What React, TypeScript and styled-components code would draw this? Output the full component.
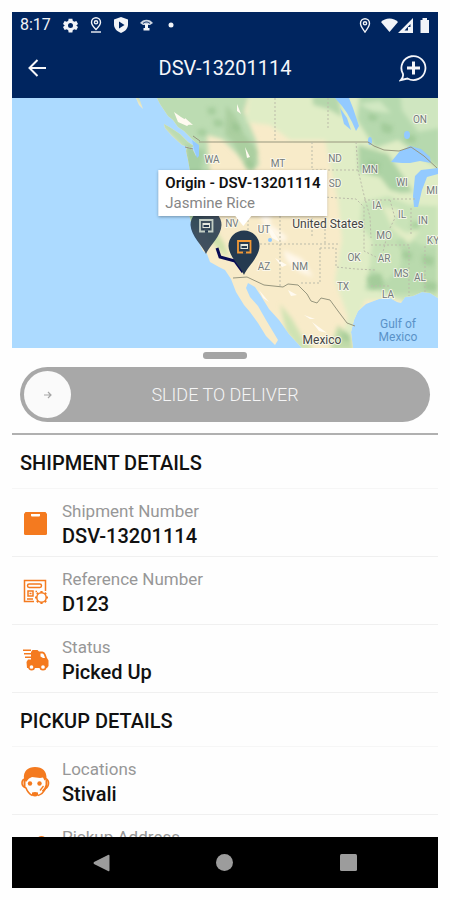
import React, { useState } from "react";
import styled, { createGlobalStyle } from "styled-components";

const GlobalStyle = createGlobalStyle`
  *, *::before, *::after { box-sizing: border-box; }
  body {
    margin: 0;
    background: #fefefe;
    color: #111;
    font-family: Roboto, "Liberation Sans", sans-serif;
  }
`;

const NAVY = "#00255f";
const ORANGE = "#f47a1f";

const Page = styled.main`
  height: 100vh;
  padding: 12px;
  display: flex;
`;

const Phone = styled.div`
  flex: 1;
  min-width: 0;
  display: flex;
  flex-direction: column;
  background: #fefefe;
`;

const StatusBar = styled.div`
  flex: none;
  height: 26px;
  padding: 0 8px;
  display: flex;
  align-items: center;
  justify-content: space-between;
  background: ${NAVY};
  color: #f2f4f8;
`;

const StatusGroup = styled.div<{ $gap: number }>`
  display: flex;
  align-items: center;
  gap: ${(p) => p.$gap}px;
`;

const Clock = styled.time`
  font-size: 16px;
  line-height: 24px;
  font-weight: 400;
`;

const Header = styled.header`
  flex: none;
  height: 60px;
  padding: 0 8px;
  display: grid;
  grid-template-columns: 34px 1fr 34px;
  align-items: center;
  background: ${NAVY};
  color: #f5f6fa;
`;

const HeaderTitle = styled.h1`
  margin: 0;
  font-size: 20px;
  line-height: 28px;
  font-weight: 400;
  text-align: center;
`;

const IconButton = styled.button`
  border: 0;
  padding: 0;
  height: 34px;
  background: none;
  color: inherit;
  display: flex;
  align-items: center;
  justify-content: center;
  cursor: pointer;
`;

const MapArea = styled.section`
  flex: none;
  height: 250px;
  position: relative;
  overflow: hidden;
  background: #acdaff;
`;

const MapDrawing = styled.svg`
  display: block;
  width: 100%;
  height: 100%;
`;

const Callout = styled.div`
  position: absolute;
  top: 72px;
  left: calc(50% + 18px);
  transform: translateX(-50%);
  padding: 3px 7px;
  background: #fff;
  box-shadow: 0 1px 3px rgba(0, 0, 0, 0.35);
  white-space: nowrap;

  &::after {
    content: "";
    position: absolute;
    top: 100%;
    left: 50%;
    margin-left: -8px;
    border: 8px solid transparent;
    border-top: 10px solid #fff;
    border-bottom: 0;
  }
`;

const CalloutTitle = styled.div`
  font-size: 15px;
  line-height: 20px;
  font-weight: 600;
`;

const CalloutText = styled.div`
  font-size: 15px;
  line-height: 20px;
  font-weight: 400;
  color: #868686;
`;

const Sheet = styled.section`
  flex: 1;
  min-height: 0;
  overflow: hidden;
  display: flex;
  flex-direction: column;
`;

const Handle = styled.div`
  flex: none;
  width: 44px;
  height: 7px;
  margin: 4px auto 8px;
  border-radius: 3px;
  background: #a5a5a5;
`;

const SlideBox = styled.div`
  flex: none;
  margin: 0 8px 11px;
  height: 55px;
  border-radius: 28px;
  background: #a8a8a8;
  display: grid;
  align-items: center;

  > * { grid-area: 1 / 1; }
`;

const SlideInput = styled.input`
  appearance: none;
  width: 100%;
  height: 55px;
  margin: 0;
  padding: 0 4px;
  background: transparent;
  cursor: pointer;

  &::-webkit-slider-thumb {
    appearance: none;
    width: 47px;
    height: 47px;
    border-radius: 50%;
    background: #fafafa;
  }
`;

const SlideLabel = styled.label`
  justify-self: center;
  pointer-events: none;
  font-size: 18px;
  line-height: 24px;
  font-weight: 300;
  color: #f5f5f5;
`;

const SlideArrow = styled.svg`
  margin-left: 22px;
  pointer-events: none;
`;

const Details = styled.div`
  border-top: 2px solid #b0b0b0;
`;

const SectionTitle = styled.h2`
  margin: 0;
  padding: 14px 8px 11px;
  font-size: 20px;
  line-height: 28px;
  font-weight: 500;
  border-bottom: 1px solid #f6f6f6;
`;

const Row = styled.div`
  height: 68px;
  padding: 2px 8px 0;
  display: grid;
  grid-template-columns: 31px 1fr;
  column-gap: 11px;
  align-items: center;
  border-bottom: 1px solid #f0f0f0;
`;

const RowIcon = styled.span`
  display: flex;
  justify-content: center;
  color: ${ORANGE};
`;

const List = styled.dl`
  margin: 0;
`;

const RowLabel = styled.dt`
  font-size: 17px;
  line-height: 24px;
  font-weight: 400;
  color: #979797;
`;

const RowValue = styled.dd`
  margin: 0;
  min-height: 26px;
  font-size: 20px;
  line-height: 26px;
  font-weight: 500;
`;

const NavBar = styled.nav`
  flex: none;
  height: 51px;
  padding: 0 28px;
  display: grid;
  grid-template-columns: repeat(3, 1fr);
  align-items: center;
  background: #000;
  color: #9c9c9c;
`;

const stateLabels: [string, number, number][] = [
  ["WA", 212, 159], ["MT", 278, 163], ["ND", 335, 158], ["ON", 420, 119],
  ["MN", 370, 169], ["SD", 335, 183], ["WI", 402, 182], ["MI", 432, 190],
  ["IA", 377, 205], ["IL", 402, 214], ["IN", 423, 220], ["NV", 232, 223],
  ["UT", 264, 229], ["MO", 384, 235], ["KY", 433, 240], ["OK", 354, 257],
  ["AR", 384, 258], ["AZ", 264, 266], ["NM", 300, 266], ["MS", 401, 273],
  ["AL", 420, 277], ["TX", 343, 286], ["LA", 388, 294],
];

function Pin({ x, y, accent, opacity }: { x: number; y: number; accent: string; opacity: number }) {
  return (
    <g transform={`translate(${x} ${y})`}>
      <path d="M0 0C-3-8-15-18-15.500-29A15.500 15.500 0 0 1 15.500-29C15.500-18 3-8 0 0Z" fill="#253a50" opacity={opacity} />
      <path d="M-6-34H6.500V-22.500H-6Z" fill="none" stroke={accent} strokeWidth="1.800" />
      <path d="M-3.500-31H4V-26H-3.500Z" fill="#e4e8df" />
      <path d="M-2.500-29H3V-27H-2.500ZM-3.500-25H-2V-24H-3.500ZM2.500-25H4V-24H2.500Z" fill="#253a50" />
      <path d="M-1-22.500H2" stroke="#253a50" strokeWidth="2.500" />
    </g>
  );
}

function RouteMap() {
  return (
    <MapDrawing viewBox="12 98 426 250" preserveAspectRatio="xMidYMid slice" role="img" aria-label="Route map">
      <defs>
        <filter id="soften" x="-20%" y="-20%" width="140%" height="140%"><feGaussianBlur stdDeviation="2" /></filter>
        <clipPath id="land">
          <path d="M157 98L160 104L164 110L168 116L173 120L178 127L184 131L190 137L195 142L198 150L196 156L193 150L187 147L186 151L188 160L190 171L189 190L188 210L193 230L203 251L207 254L210 262L219 267L225 270L231 279L236 292L244 305L250 312L258 323L266 336L275 345L278 340L272 330L266 320L258 306L250 297L246 288L248 283L255 287L261 296L269 309L279 320L289 334L302 348H353L351 332L354 320L358 311L366 304L379 299L390 298L397 302L401 303L405 297L413 296L422 292L430 293L438 298V98Z" />
          <path d="M164 124L171 128L180 134L188 142L194 146L191 148L182 145L172 136L165 128Z" />
          <path d="M136 98H139L143 109L139 105Z" />
        </clipPath>
      </defs>
      <rect x="12" y="98" width="426" height="250" fill="#acdaff" />
      <g clipPath="url(#land)">
        <rect x="12" y="98" width="426" height="250" fill="#f8ebc9" />
        <g filter="url(#soften)">
          <path d="M130 90H250L244 112L256 140L259 165L250 172L238 155L222 139L207 135L210 175L201 202L202 230L185 230V150L155 120Z" fill="#bcdcb2" />
          <path d="M185 145L205 150L199 185L204 213L197 229L187 213Z" fill="#a7cfa2" />
          <path d="M250 90H442V300H365L351 345H340L348 317L335 280L342 240L338 200L325 140H290L270 125L246 122Z" fill="#e0edc6" />
          <path d="M312 94L338 94L342 117L328 109L313 105Z" fill="#b5d7ab" />
          <path d="M360 90H440V170L398 140L375 148L357 120Z" fill="#b6d9ae" />
          <path d="M400 90H440V128L418 132L402 110Z" fill="#cfe6c0" />
          <path d="M358 145L388 154L403 176L413 192L401 193L390 190L380 177L359 172Z" fill="#add3a5" />
          <path d="M362 202L388 196L410 205L438 206V302H405L379 291L369 274L372 241L360 224Z" fill="#c9e3b8" />
          <path d="M370 252L392 240L402 250L400 269L385 281L370 267L365 290L382 290L396 294L438 293V245L423 246L405 237Z" fill="#b9daad" />
          <path d="M226 105L235 115L244 134L258 151L254 171L240 157L233 142L225 135Z" fill="#abcfa0" />
          <path d="M204 219L213 227L224 243L229 258L221 252L207 237Z" fill="#cfe1ab" />
          <path d="M280 304L292 319L303 338L315 350H298L286 331Z" fill="#cfe3b3" />
          <path d="M338 325L350 337L354 350H330Z" fill="#c1dbaa" />
          <path d="M256 205L271 214L270 224L287 237L284 242L266 230Z" fill="#fff8eb" />
          <path d="M283 250L302 259L313 277L300 272L287 261Z" fill="#fff8eb" />
          <path d="M382 206L400 210L392 224L406 233L420 230L409 244L393 229Z" fill="#e3edc6" />
          <path d="M268 206L310 202L319 210L289 215Z" fill="#e4e9bd" />
          <path d="M359 104L380 101L391 113L372 111Z" fill="#d1e8c2" />
        </g>
        <g fill="#fffaf0">
          <path d="M174 112L181 117L191 123L187 126L178 122ZM185 118L193 125L184 124ZM237 104L241 114L237 111ZM245 147L250 157L247 158Z" />
          <path d="M265 224L272 230L280 242L272 238ZM275 258L287 265L282 267ZM288 290L297 295L291 296ZM312 322L327 333L319 331ZM259 290L269 302L263 298ZM304 315L315 319L310 319Z" />
        </g>
        <g fill="#8fbe87" opacity=".5" filter="url(#soften)">
          <path d="M207 108L215 107L216 114L209 115ZM213 119L222 120L224 126L215 127ZM232 122L239 125L240 132L233 130ZM197 130L205 129L207 135L199 136Z" />
          <path d="M201 180L207 182L208 189L202 187ZM244 161L252 161L253 170L246 169ZM381 122L393 126L391 134L382 132ZM369 113L378 116L376 121L368 120Z" />
          <path d="M405 134L416 136L415 143L406 142ZM366 277L381 273L384 287L371 290ZM402 250L412 253L411 260L403 258ZM422 255L434 257L433 266L423 264ZM424 281L437 283L436 291L425 290ZM368 161L380 163L378 171L369 170ZM412 221L420 223L418 229L411 228ZM341 331L349 334L350 342L343 340Z" />
        </g>
      </g>
      <g fill="#93caff">
        <path d="M335 98H349L353 108L359 126L356 131L352 122L347 113L342 106Z" />
        <path d="M340 108L347 118L351 130L344 124Z" />
        <path d="M391 162L400 151L410 146L421 149L430 157L431 163L420 161L410 163L402 163Z" />
        <path d="M415 176L421 170L438 168V174L427 177L422 190L418 207H414L413 196Z" />
        <ellipse cx="407" cy="135" rx="3" ry="4" /><ellipse cx="370" cy="141" rx="2" ry="4" />
        <path d="M192 140L199 145L199 156L197 158L194 149Z" /><circle cx="270" cy="240" r="2" />
      </g>
      <g fill="none" stroke="#97967e" strokeWidth="1" strokeLinejoin="round">
        <path d="M199 142H368L374 146L384 150L399 151L411 147L424 156L437 168" />
        <path d="M233 278L247 277L264 285L283 287L288 284L298 285L307 294L311 301L317 303L321 298L330 300L338 311L347 323L355 326" />
        <path d="M185 147L193 149M193 136L200 141" />
      </g>
      <g fill="none" stroke="#bbbba9" strokeWidth="1" strokeDasharray="2 2">
        <path d="M275 98V142M328 98V130M312 142V236M312 170H359M323 197L356 199L364 207V251L376 257M280 212V286M248 220V244L255 257M248 244H338M280 206H325V244M320 248H336V267L356 269L376 270M320 248V283H301M356 142L358 170L364 195L370 217L371 238M364 200H390M390 200L395 218L388 232L383 252M371 245H409V296M393 199H415M411 208V236M425 246V292M371 286H390" />
      </g>
      <g fontFamily='Roboto, "Liberation Sans", sans-serif' textAnchor="middle" paintOrder="stroke" stroke="#fcfbf2" strokeOpacity=".8" strokeWidth="2" strokeLinejoin="round">
        <g fontSize="10" fill="#737a7b">
          {stateLabels.map(([name, x, y]) => <text key={name} x={x} y={y + 4}>{name}</text>)}
        </g>
        <text x="328" y="228" fontSize="12" fill="#444">United States</text>
        <text x="322" y="344" fontSize="12" fill="#444">Mexico</text>
      </g>
      <g fontFamily='Roboto, "Liberation Sans", sans-serif' textAnchor="middle" fontSize="12" fill="#5a92c8">
        <text x="398" y="328">Gulf of</text>
        <text x="398" y="341">Mexico</text>
      </g>
      <path d="M217 248L220 257L235 261L243 272" fill="none" stroke="#080a55" strokeWidth="3" />
      <Pin x={206} y={254} accent="#c4cfc5" opacity={0.88} />
      <Pin x={244} y={275} accent="#f39a36" opacity={1} />
    </MapDrawing>
  );
}

const GearIcon = () => (
  <svg width="15" height="15" viewBox="0 0 24 24" fill="currentColor" aria-hidden="true">
    <path fillRule="evenodd" d="M9 1H15L15.600 4.500L18 6L21.400 4.700L24 9.500L21.200 12L24 14.500L21.400 19.300L18 18L15.600 19.500L15 23H9L8.400 19.500L6 18L2.600 19.300L0 14.500L2.800 12L0 9.500L2.600 4.700L6 6L8.400 4.500ZM12 8A4 4 0 1 0 12 16A4 4 0 0 0 12 8Z" />
  </svg>
);

const PlaceIcon = ({ base }: { base: boolean }) => (
  <svg width="12" height="16" viewBox="0 0 12 16" fill="none" stroke="currentColor" strokeWidth="1.400" aria-hidden="true">
    <path d={base ? "M6 12.500C4 10.500 1.500 8.500 1.500 5.300A4.500 4.500 0 0 1 10.500 5.300C10.500 8.500 8 10.500 6 12.500Z" : "M6 15C4 12 1.500 9.500 1.500 6.300A4.500 4.500 0 0 1 10.500 6.300C10.500 9.500 8 12 6 15Z"} />
    <circle cx="6" cy={base ? 5.3 : 6.3} r="1.600" />
    {base && <path d="M1 15H11" />}
  </svg>
);

const ShieldIcon = () => (
  <svg width="14" height="16" viewBox="0 0 14 16" aria-hidden="true">
    <path d="M7 0L14 2.500V7.500C14 11.500 11 14.500 7 16C3 14.500 0 11.500 0 7.500V2.500Z" fill="currentColor" />
    <path d="M5 4.500L10.500 8L5 11.500Z" fill={NAVY} />
  </svg>
);

const SignalIcon = () => (
  <svg width="13" height="12" viewBox="0 0 13 12" aria-hidden="true">
    <path d="M0 4C3-.5 10-.5 13 4L10 6H3Z" fill="currentColor" opacity=".85" />
    <path d="M3 4.500C5 2.500 8 2.500 10 4.500" fill="none" stroke={NAVY} />
    <path d="M5 5H8V9H9.500V11.500H3.500V9H5Z" fill="currentColor" />
  </svg>
);

const StatusIcons = () => (
  <svg width="49" height="15" viewBox="0 0 49 15" fill="currentColor" aria-hidden="true">
    <path d="M0 4C4-.8 13-.8 17 4L8.500 14Z" />
    <path fillRule="evenodd" d="M32 0V15H17ZM29.500 6L23.500 12.500H27V9H29.500Z" />
    <path d="M41.500 0H46V2H48V15H39.500V2H41.500Z" />
  </svg>
);

const PackageIcon = () => (
  <svg width="23" height="23" viewBox="0 0 23 23" aria-hidden="true">
    <path d="M1.500 0H21.500L23 2V21.500Q23 23 21.500 23H1.500Q0 23 0 21.500V2Z" fill="currentColor" />
    <path d="M7 2H16V3.500Q16 4.500 15 4.500H8Q7 4.500 7 3.500Z" fill="#fff" />
  </svg>
);

const ReferenceIcon = () => (
  <svg width="26" height="26" viewBox="0 0 26 26" fill="none" stroke="currentColor" strokeWidth="1.500" aria-hidden="true">
    <path d="M11 22.500H1.500V1.500H22.500V12" />
    <rect x="4.500" y="5" width="14" height="3.500" rx="1.700" />
    <rect x="5" y="12" width="5" height="5" />
    <path d="M6.500 14.500H8.500M12.500 12.500H14M4 20H10" />
    <circle cx="18.500" cy="18.500" r="4.700" />
    <path d="M18.500 13.800V12M18.500 25V23.200M13.800 18.500H12M25 18.500H23.200M15.200 15.200L13.900 13.900M23.100 23.100L21.800 21.800M15.200 21.800L13.900 23.100M23.100 13.900L21.800 15.200" strokeWidth="2.200" />
  </svg>
);

const TruckIcon = () => (
  <svg width="26" height="22" viewBox="0 0 26 22" aria-hidden="true">
    <path d="M0 .5H8V2H0ZM1 4H8V5.500H1ZM2 7.500H8V9H2Z" fill="currentColor" />
    <path d="M8 3L9.500 1H14.500L16 2.500H19.500Q21.500 2.500 22.500 5L24 9L25.500 11.500V17L24 19H4L3.500 13L5 10.500H8Z" fill="currentColor" />
    <path d="M17.500 4.500H19.500Q20.500 4.500 21 6L22 9H20L17.500 7.500Z" fill="#fff" />
    <g fill="#fff" stroke="currentColor" strokeWidth="1.700"><circle cx="8.500" cy="18" r="2.700" /><circle cx="20" cy="18" r="2.700" /></g>
  </svg>
);

const AgentIcon = () => (
  <svg width="29" height="32" viewBox="0 0 29 32" aria-hidden="true">
    <path d="M3 13C2 5 7 1 14 1C21.500 1 26 5 25.500 13L23.500 14.500L22 11.500L19 12L11 11L8 12.500L5 16Z" fill="currentColor" />
    <path d="M4 13Q1 13.500 1 17Q1 20.500 5 22Q7 27.500 11.500 29.500M24.500 12.500Q28 14 27.500 18Q27 21.500 24.500 22.500Q22 28 17 29.500" fill="none" stroke="currentColor" strokeWidth="1.600" />
    <path d="M3.500 14V21M25.500 14V19Q25 22.500 21.500 25.500" fill="none" stroke="currentColor" strokeWidth="2" />
    <circle cx="9" cy="17.500" r="2.200" fill="currentColor" /><circle cx="18.500" cy="17.500" r="2.200" fill="currentColor" />
    <path d="M11 26.500Q14 25.500 17 26.500V29.500Q14 31.500 11 29.500Z" fill="currentColor" />
    <path d="M22.500 20L19 24.500" fill="none" stroke="currentColor" strokeWidth="1.300" />
  </svg>
);

const AddressIcon = () => (
  <svg width="26" height="28" viewBox="0 0 26 28" fill="none" stroke="currentColor" strokeWidth="1.800" aria-hidden="true">
    <path d="M18.500 16C16 12 13.500 9.500 13.500 6A5 5 0 0 1 23.500 6C23.500 9.500 21 12 18.500 16Z" />
    <circle cx="18.500" cy="6" r="1.500" /><path d="M12 12H4L1 24H25L22 13" />
  </svg>
);

function DetailRow({ icon, label, value }: { icon: React.ReactNode; label: string; value?: string }) {
  return (
    <Row>
      <RowIcon>{icon}</RowIcon>
      <div>
        <RowLabel>{label}</RowLabel>
        <RowValue>{value}</RowValue>
      </div>
    </Row>
  );
}

export default function App() {
  const [slide, setSlide] = useState(0);
  return (
    <Page>
      <GlobalStyle />
      <Phone>
        <StatusBar>
          <StatusGroup $gap={12}>
            <Clock>8:17</Clock>
            <GearIcon />
            <PlaceIcon base />
            <ShieldIcon />
            <SignalIcon />
            <svg width="12" height="6" viewBox="0 0 12 6" fill="currentColor" aria-hidden="true"><circle cx="6" cy="3" r="2.500" /></svg>
          </StatusGroup>
          <StatusGroup $gap={10}>
            <PlaceIcon base={false} />
            <StatusIcons />
          </StatusGroup>
        </StatusBar>
        <Header>
          <IconButton aria-label="Back">
            <svg width="18" height="18" viewBox="0 0 18 18" fill="none" stroke="currentColor" strokeWidth="2" aria-hidden="true"><path d="M18 9H1.500M9.500 1L1.500 9L9.500 17" /></svg>
          </IconButton>
          <HeaderTitle>DSV-13201114</HeaderTitle>
          <IconButton aria-label="New message">
            <svg width="28" height="28" viewBox="0 0 28 28" fill="none" stroke="currentColor" strokeWidth="1.800" aria-hidden="true">
              <path d="M4 20A12 12 0 1 1 8.500 24.500L2 26Q4.500 23.500 4 20Z" />
              <path d="M14.500 7.500V20.500M8 14H21" strokeWidth="3" />
            </svg>
          </IconButton>
        </Header>
        <MapArea>
          <RouteMap />
          <Callout>
            <CalloutTitle>Origin - DSV-13201114</CalloutTitle>
            <CalloutText>Jasmine Rice</CalloutText>
          </Callout>
        </MapArea>
        <Sheet>
          <Handle />
          <SlideBox>
            <SlideInput id="deliver" type="range" min={0} max={100} value={slide} onChange={(e) => setSlide(Number(e.target.value))} />
            <SlideLabel htmlFor="deliver">SLIDE TO DELIVER</SlideLabel>
            {slide === 0 && (
              <SlideArrow width="11" height="10" viewBox="0 0 11 10" fill="none" stroke="#a5a5a5" strokeWidth="1.200" aria-hidden="true"><path d="M2 5H9M6 2L9 5L6 8" /></SlideArrow>
            )}
          </SlideBox>
          <Details>
            <SectionTitle>SHIPMENT DETAILS</SectionTitle>
            <List>
              <DetailRow icon={<PackageIcon />} label="Shipment Number" value="DSV-13201114" />
              <DetailRow icon={<ReferenceIcon />} label="Reference Number" value="D123" />
              <DetailRow icon={<TruckIcon />} label="Status" value="Picked Up" />
            </List>
            <SectionTitle>PICKUP DETAILS</SectionTitle>
            <List>
              <DetailRow icon={<AgentIcon />} label="Locations" value="Stivali" />
              <DetailRow icon={<AddressIcon />} label="Pickup Address" />
            </List>
          </Details>
        </Sheet>
        <NavBar>
          <IconButton aria-label="Navigate back"><svg width="17" height="18" viewBox="0 0 17 18" fill="currentColor" aria-hidden="true"><path d="M15 1Q16.500 0 16.500 2V16Q16.500 18 15 17L1 10Q0 9 1 8Z" /></svg></IconButton>
          <IconButton aria-label="Home"><svg width="17" height="17" viewBox="0 0 17 17" fill="currentColor" aria-hidden="true"><circle cx="8.500" cy="8.500" r="8.500" /></svg></IconButton>
          <IconButton aria-label="Recent apps"><svg width="17" height="17" viewBox="0 0 17 17" fill="currentColor" aria-hidden="true"><rect width="17" height="17" rx="1.500" /></svg></IconButton>
        </NavBar>
      </Phone>
    </Page>
  );
}
